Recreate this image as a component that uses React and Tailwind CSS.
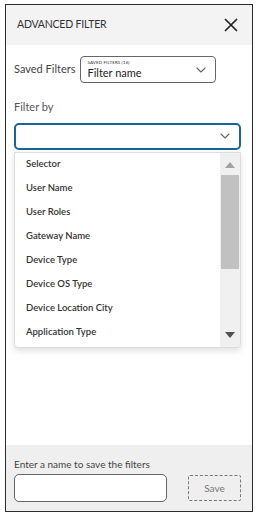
import React from "react";

const options = [
  "Selector",
  "User Name",
  "User Roles",
  "Gateway Name",
  "Device Type",
  "Device OS Type",
  "Device Location City",
  "Application Type",
];

function Chevron({ className }) {
  return (
    <svg className={className} width="10" height="6" viewBox="0 0 10 6" fill="none">
      <path d="M1 1l4 4 4-4" stroke="#666" strokeWidth="1.1" strokeLinecap="round" strokeLinejoin="round" />
    </svg>
  );
}

export default function App() {
  return (
    <div className="w-[256px] h-[514px] bg-white pt-[4px] pl-[5px] font-['Lato','Liberation_Sans',sans-serif] text-[#333]">
      <div className="w-[248px] h-[508px] border border-[#2b2b2b] flex flex-col bg-white">
        {/* header */}
        <div className="h-[40px] bg-[#f3f3f3] flex items-center justify-between pl-[11px] pr-[14px]">
          <span className="text-[10.5px] tracking-[-0.2px] text-[#333]">ADVANCED FILTER</span>
          <svg width="14" height="14" viewBox="0 0 14 14">
            <path d="M1 1l12 12M13 1L1 13" stroke="#222" strokeWidth="1.7" />
          </svg>
        </div>

        {/* saved filters */}
        <div className="flex items-center gap-[5px] pl-[8px] mt-[11px]">
          <span className="text-[11px] text-[#444]">Saved Filters</span>
          <div className="w-[136px] h-[27px] border border-[#666] rounded-[4px] flex items-center justify-between pl-[6px] pr-[9px]">
            <div className="flex flex-col leading-none">
              <span className="text-[4.5px] text-[#333] tracking-[0.1px]">SAVED FILTERS (16)</span>
              <span className="text-[11px] text-[#222] mt-[1px]">Filter name</span>
            </div>
            <Chevron />
          </div>
        </div>

        {/* filter by */}
        <div className="pl-[8px] pr-[11px] mt-[16px]">
          <div className="text-[11px] text-[#555]">Filter by</div>
          <div className="mt-[7px] h-[27px] border-2 border-[#1b6496] rounded-[5px] flex items-center justify-end pr-[9px]">
            <Chevron />
          </div>
          <div className="mt-[2px] h-[196px] border border-[#ddd] rounded-b-[4px] bg-white shadow-[0_3px_6px_rgba(0,0,0,0.12)] flex overflow-hidden">
            <div className="flex-1 flex flex-col">
              {options.map((o) => (
                <div key={o} className="h-[24px] flex items-center pl-[11px] text-[9.5px] font-semibold text-[#333]">
                  {o}
                </div>
              ))}
            </div>
            <div className="w-[20px] bg-[#f0f0f0] flex flex-col items-center">
              <svg className="mt-[9px]" width="10" height="6" viewBox="0 0 10 6">
                <path d="M0 6L5 0l5 6z" fill="#a3a3a3" />
              </svg>
              <div className="w-[18px] h-[94px] bg-[#c1c1c1] mt-[7px]" />
              <svg className="mt-auto mb-[9px]" width="10" height="6" viewBox="0 0 10 6">
                <path d="M0 0h10L5 6z" fill="#505050" />
              </svg>
            </div>
          </div>
        </div>

        {/* footer */}
        <div className="mt-auto h-[66px] bg-[#efefef] pl-[8px] pr-[11px] pt-[12px]">
          <div className="text-[10px] text-[#444]">Enter a name to save the filters</div>
          <div className="flex items-center justify-between mt-[2px]">
            <div className="w-[153px] h-[28px] border border-[#666] rounded-[5px] bg-white" />
            <div className="w-[53px] h-[26px] border border-dashed border-[#777] rounded-[2px] flex items-center justify-center text-[10px] text-[#777]">
              Save
            </div>
          </div>
        </div>
      </div>
    </div>
  );
}
